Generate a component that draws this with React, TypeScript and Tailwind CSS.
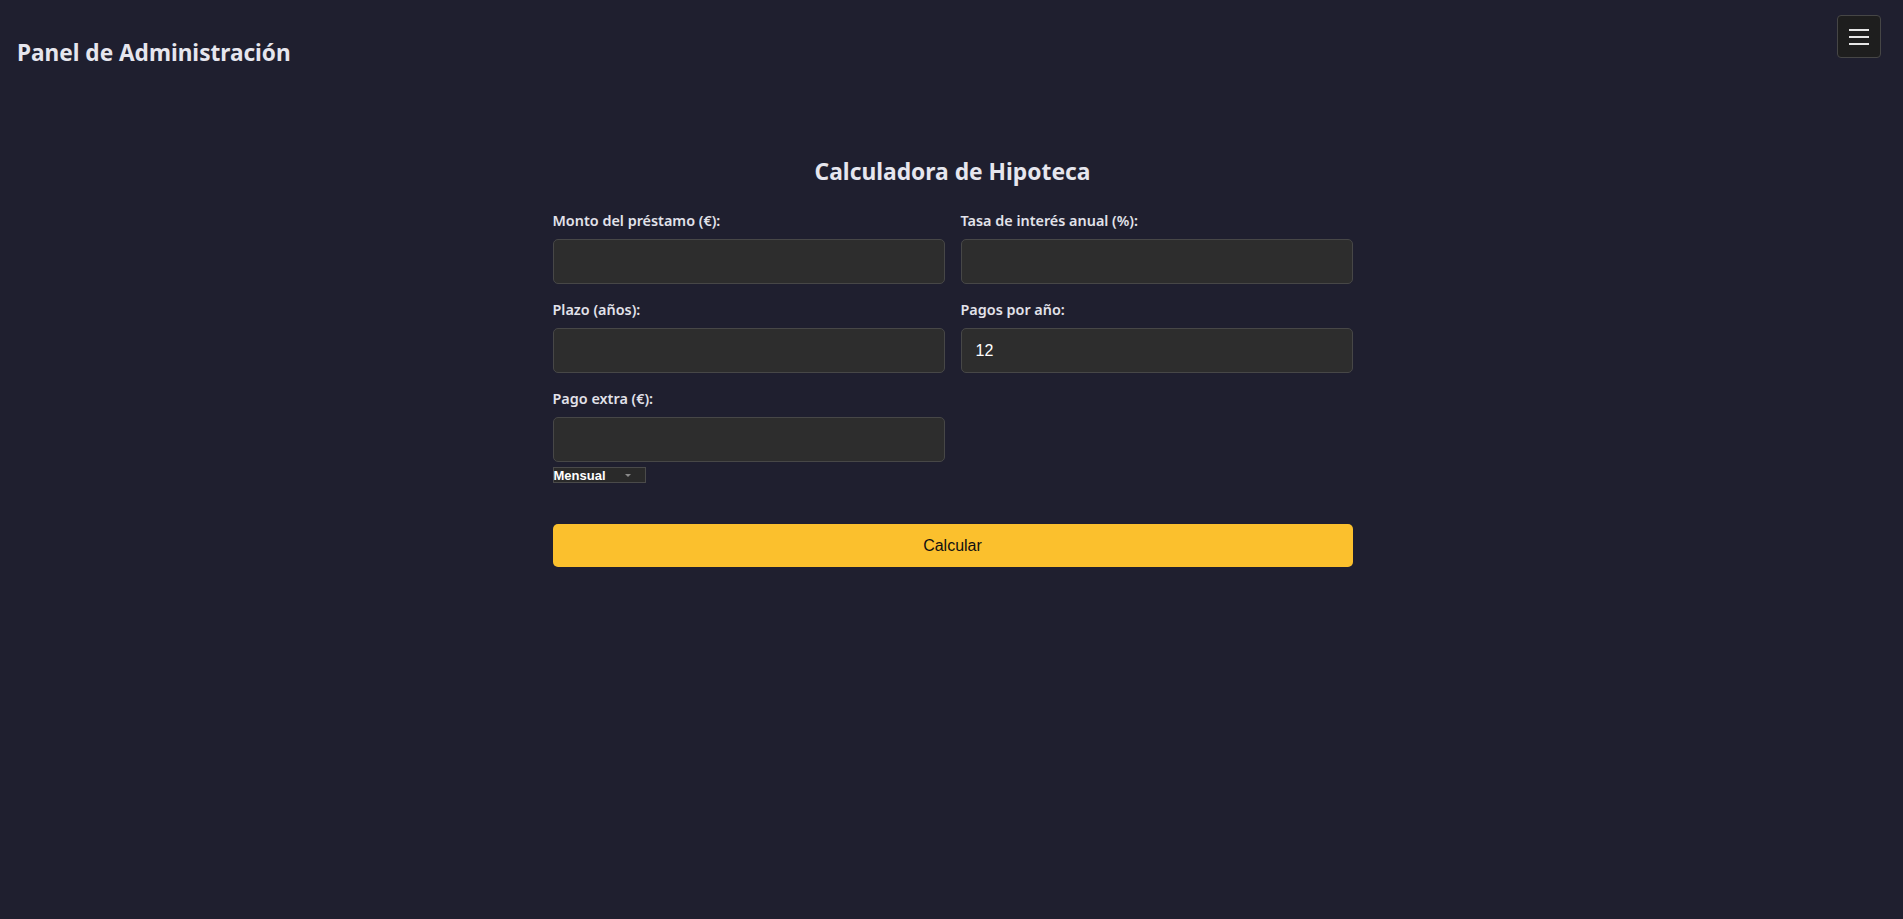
import React from "react";

const sans = "font-['Segoe_UI','Noto_Sans',sans-serif]";

function Field({
  label,
  value,
  children,
}: {
  label: string;
  value?: string;
  children?: React.ReactNode;
}) {
  return (
    <div className="flex flex-col">
      <label className={`${sans} mb-2 block text-[14.4px] font-semibold leading-5 text-[#e2e2ea]`}>
        {label}
      </label>
      <input
        type="text"
        defaultValue={value}
        className="h-[45px] w-full rounded-[5px] border border-[#474747] bg-[#2d2d2d] px-[14px] font-['Liberation_Sans',Arial,sans-serif] text-[16px] text-white outline-none"
      />
      {children}
    </div>
  );
}

export default function App() {
  return (
    <div className="min-h-screen bg-[#1f1f2f] text-[#e6e6ee]">
      <header className="flex items-start justify-between pl-[17px] pr-[22px] pt-[15px]">
        <h1 className={`${sans} mt-[22px] text-[22.6px] font-bold leading-8 text-[#e6e6ee]`}>
          Panel de Administración
        </h1>
        <button className="flex h-[43px] w-[44px] flex-col items-center justify-center gap-[5px] rounded-[4px] border border-[#464646] bg-[#1e1e1e]">
          <span className="block h-[2px] w-[20px] bg-[#e6e6e6]" />
          <span className="block h-[2px] w-[20px] bg-[#e6e6e6]" />
          <span className="block h-[2px] w-[20px] bg-[#e6e6e6]" />
        </button>
      </header>

      <main className="mx-auto mt-[87px] w-[802px] pl-[2px]">
        <h2 className={`${sans} text-center text-[22.8px] font-bold leading-8 text-[#e6e6ee]`}>
          Calculadora de Hipoteca
        </h2>

        <div className="mt-[23px] grid grid-cols-2 gap-x-4 gap-y-4">
          <Field label="Monto del préstamo (€):" />
          <Field label="Tasa de interés anual (%):" />
          <Field label="Plazo (años):" />
          <Field label="Pagos por año:" value="12" />
          <Field label="Pago extra (€):">
            <div className="mt-[5px] flex h-[16px] w-[93px] items-center justify-between border border-[#4a4a4a] bg-[#2a2a2a] pr-[14px]">
              <span className="font-['Liberation_Sans',Arial,sans-serif] text-[13px] font-bold leading-none text-white">
                Mensual
              </span>
              <span className="h-0 w-0 border-x-[3px] border-t-[3px] border-x-transparent border-t-[#8a8a8a]" />
            </div>
          </Field>
        </div>

        <button className="mt-[41px] h-[43px] w-full rounded-[5px] bg-[#fbc02d] font-['Liberation_Sans',Arial,sans-serif] text-[16px] text-[#111]">
          Calcular
        </button>
      </main>
    </div>
  );
}
